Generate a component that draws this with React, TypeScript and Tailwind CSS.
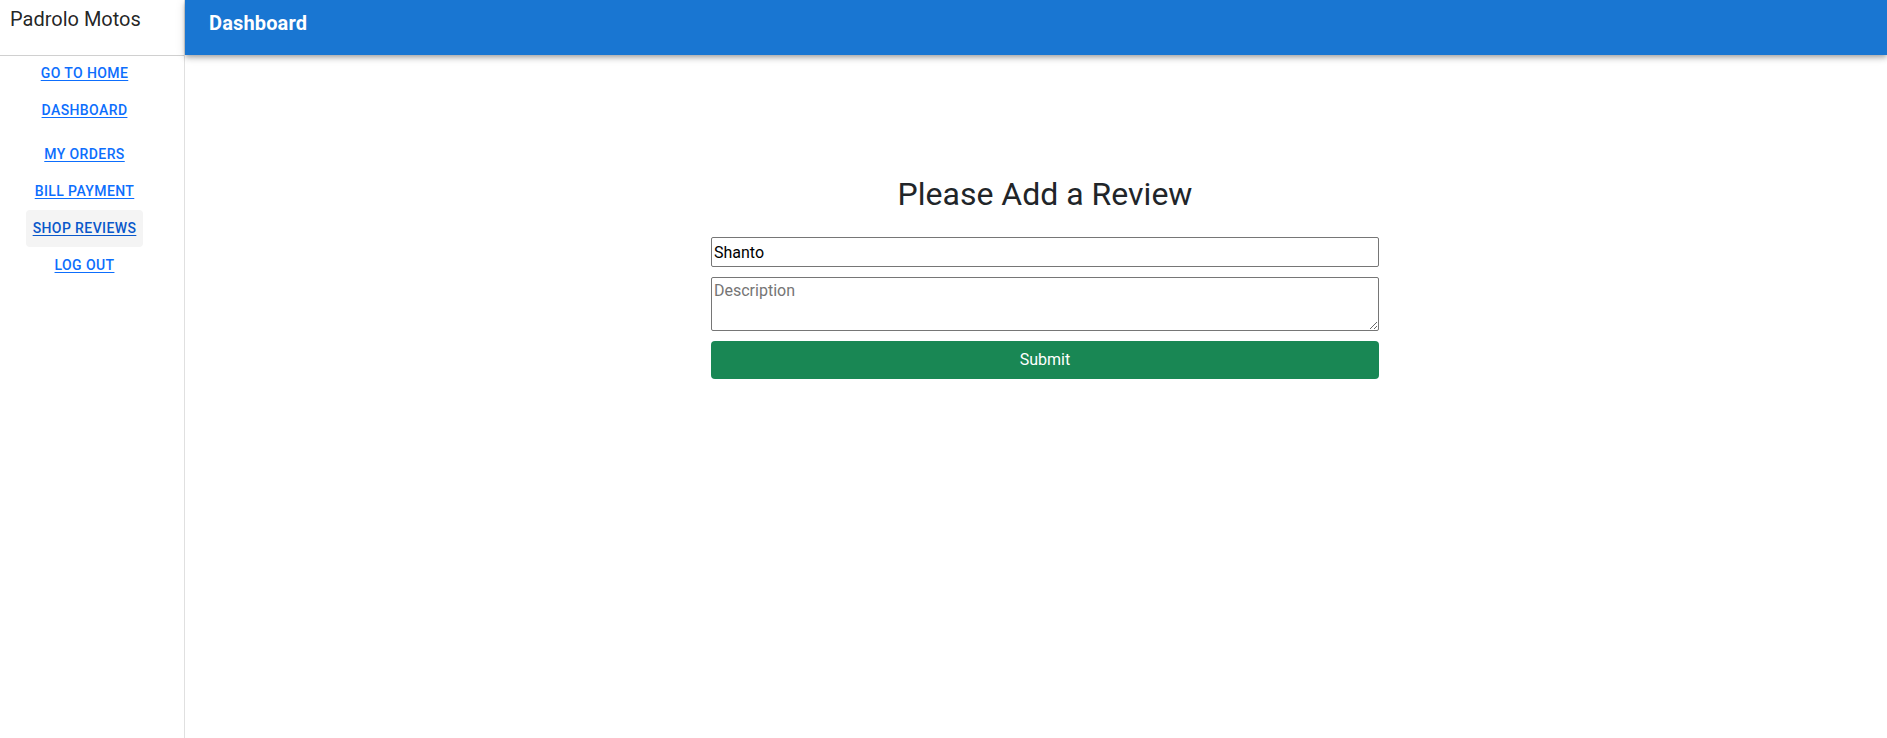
const links = [
  { label: "GO TO HOME", gap: false, active: false },
  { label: "DASHBOARD", gap: false, active: false },
  { label: "MY ORDERS", gap: true, active: false },
  { label: "BILL PAYMENT", gap: false, active: false },
  { label: "SHOP REVIEWS", gap: false, active: true },
  { label: "LOG OUT", gap: false, active: false },
];

export default function App() {
  return (
    <div className="flex h-[738px] w-full bg-white font-['Roboto',sans-serif] text-[#212529]">
      {/* Sidebar */}
      <aside className="w-[185px] shrink-0 border-r border-[#e0e0e0]">
        <div className="h-[56px] border-b border-[#d0d0d0] pl-[10px] pt-[5px]">
          <h1 className="text-[20px] leading-[28px] text-[rgba(0,0,0,0.87)]">Padrolo Motos</h1>
        </div>
        <nav className="-mt-[1px] flex w-[169px] flex-col items-center">
          {links.map((l) => (
            <button
              key={l.label}
              className={`h-[37px] rounded-[4px] px-[7px] text-[14px] font-medium tracking-[0.4px] underline underline-offset-[2px] ${
                l.gap ? "mt-[7px]" : ""
              } ${l.active ? "bg-[#f4f4f4] text-[#0a58ca]" : "text-[#0d6efd]"}`}
            >
              {l.label}
            </button>
          ))}
        </nav>
      </aside>

      {/* Main */}
      <div className="flex flex-1 flex-col">
        <header className="relative z-10 h-[55px] shrink-0 bg-[#1976d2] pl-[24px] pt-[7px] shadow-[0px_2px_4px_-1px_rgba(0,0,0,0.2),0px_4px_5px_0px_rgba(0,0,0,0.14),0px_1px_10px_0px_rgba(0,0,0,0.12)]">
          <span className="text-[20px] font-bold leading-[32px] tracking-[0.15px] text-white">Dashboard</span>
        </header>

        <main className="pl-[18px]">
          <div className="mx-auto mt-[120px] w-[668px]">
            <h2 className="mb-[24px] text-center text-[32px] font-normal leading-[38.4px] text-[#212529]">
              Please Add a Review
            </h2>
            <form className="flex flex-col">
              <input
                defaultValue="Shanto"
                className="h-[30px] w-full rounded-[2px] border border-[#767676] px-[2px] text-[16px] text-black outline-none"
              />
              <textarea
                placeholder="Description"
                className="mt-[10px] h-[54px] w-full rounded-[2px] border border-[#767676] px-[2px] py-[1px] text-[16px] text-black outline-none placeholder:text-[#757575]"
              />
              <button
                type="button"
                className="mt-[10px] h-[38px] w-full rounded-[4px] bg-[#198754] text-[16px] text-white"
              >
                Submit
              </button>
            </form>
          </div>
        </main>
      </div>
    </div>
  );
}
